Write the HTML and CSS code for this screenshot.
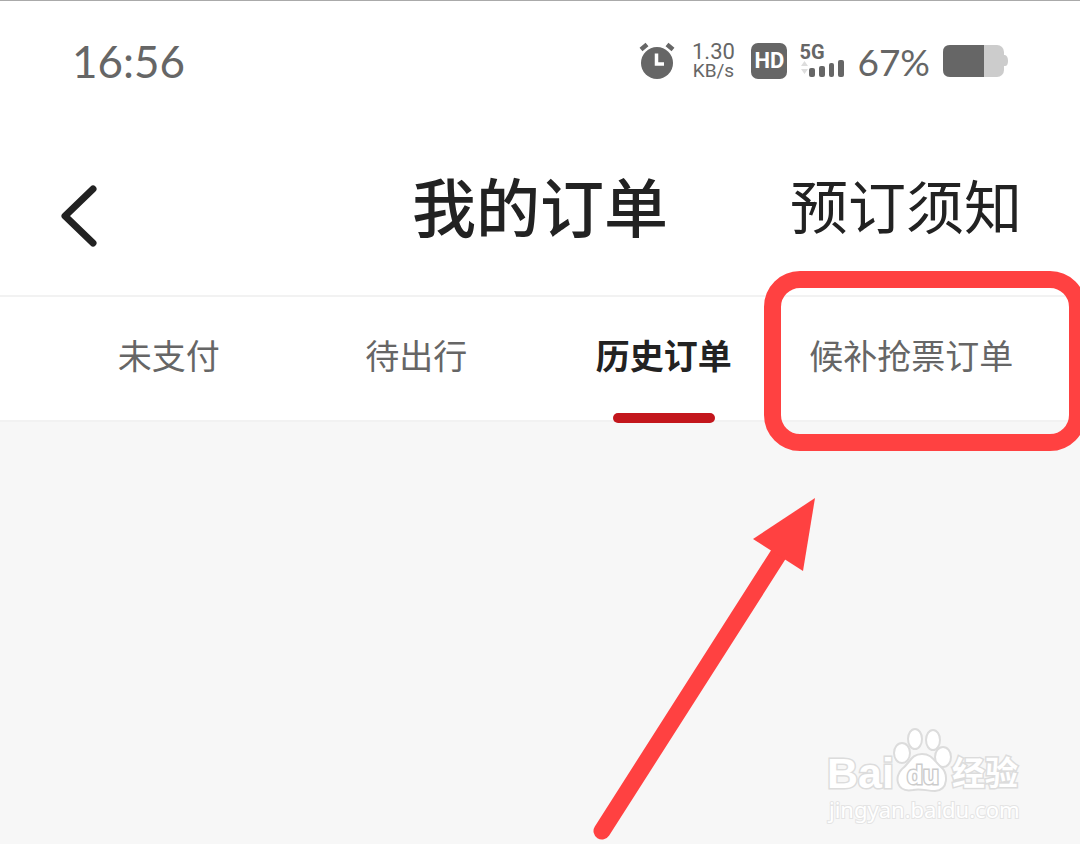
FILE: index.html
```html
<!DOCTYPE html>
<html lang="zh-CN">
<head>
<meta charset="utf-8">
<meta name="viewport" content="width=device-width, initial-scale=1">
<title>我的订单</title>
<link rel="stylesheet" href="styles.css">
</head>
<body>
<div class="page">
  <div class="status">
    <time class="clock">16:56</time>
    <div class="indicators">
      <svg class="alarm" width="36" height="38" viewBox="0 0 36 38" aria-hidden="true">
        <circle cx="18" cy="21" r="16" fill="#666"/>
        <path d="M2 7.500L8 2.500M28 2.500L34 7.500" stroke="#666" stroke-width="4.500" fill="none"/>
        <path d="M17.500 11.500V22H25" stroke="#fff" stroke-width="3.500" fill="none"/>
      </svg>
      <div class="speed"><span class="rate">1.30</span><span class="unit">KB/s</span></div>
      <span class="hd">HD</span>
      <div class="network">
        <span class="generation">5G</span>
        <svg class="bars" width="46" height="18" viewBox="0 0 46 18" aria-hidden="true">
          <path d="M2 6L5.500 1L9 6ZM2 9H9L5.500 14Z" fill="#ddd"/>
          <rect x="10" y="8" width="6" height="9" rx="2" fill="#666"/>
          <rect x="20" y="6" width="6" height="11" rx="2" fill="#666"/>
          <rect x="30" y="3" width="5" height="14" rx="2" fill="#666"/>
          <rect x="39" y="0" width="6" height="17" rx="2" fill="#666"/>
        </svg>
      </div>
      <span class="percent">67%</span>
      <svg class="battery" width="65" height="34" viewBox="0 0 65 34" aria-hidden="true">
        <rect x="0" y="1" width="61" height="32" rx="7" fill="#ccc"/>
        <path d="M61 11H62Q65 12 65 17T62 22H61Z" fill="#ccc"/>
        <path d="M41 1H7Q0 1 0 8V26Q0 33 7 33H41Z" fill="#666"/>
      </svg>
    </div>
  </div>

  <header class="header">
    <button class="back" type="button" aria-label="返回">
      <svg width="36" height="62" viewBox="0 0 36 62" aria-hidden="true">
        <path d="M32 4L4 31L32 58" fill="none" stroke="#222" stroke-width="7" stroke-linecap="round" stroke-linejoin="round"/>
      </svg>
    </button>
    <h1 class="title">我的订单</h1>
    <a class="notice" href="#notice">预订须知</a>
  </header>

  <nav class="tabs">
    <a class="tab" href="#unpaid">未支付</a>
    <a class="tab" href="#upcoming">待出行</a>
    <a class="tab active" href="#history" aria-current="page">历史订单</a>
    <a class="tab marked" href="#waitlist">候补抢票订单</a>
  </nav>

  <main class="content">
    <svg class="arrow" width="230" height="350" viewBox="590 495 230 350" aria-hidden="true">
      <path d="M602 831L780 552" stroke="#ff4141" stroke-width="17" stroke-linecap="round"/>
      <path d="M815 498L753 539L803 571Z" fill="#ff4141"/>
    </svg>
    <div class="watermark">
      <svg class="logo" width="204" height="72" viewBox="824 726 204 72" role="img" aria-label="Baidu 经验">
        <g fill="#fff" stroke="#dcdcdc" stroke-width="2">
          <ellipse cx="902" cy="753" rx="8" ry="10"/>
          <ellipse cx="915" cy="739" rx="7" ry="10"/>
          <ellipse cx="933" cy="740" rx="7" ry="10"/>
          <ellipse cx="943" cy="757" rx="8" ry="10"/>
          <path d="M922 754C932 754 934 761 941 767C948 773 949 790 935 791C927 791 920 788 913 790C896 793 894 776 902 769C910 763 911 754 922 754Z"/>
        </g>
        <text class="mark latin" x="827" y="788">Bai</text>
        <text class="mark du" x="907" y="784">du</text>
        <text class="mark chinese" x="952" y="785">经验</text>
      </svg>
      <span class="site">jingyan.baidu.com</span>
    </div>
  </main>
</div>
</body>
</html>
```
FILE: styles.css
```css
* { box-sizing: border-box; }

body {
  margin: 0;
  background: #f7f7f7;
  color: #222;
  font-family: "Noto Sans CJK SC", sans-serif;
}

a { color: inherit; text-decoration: none; }

.page {
  display: flex;
  flex-direction: column;
  min-height: 100vh;
  overflow: hidden;
  border-top: 1px solid #aaa;
}

.status {
  display: flex;
  align-items: center;
  justify-content: space-between;
  height: 120px;
  padding: 0 72px;
  background: #fff;
  color: #666;
}

.clock { font: 44px/1 Lato, sans-serif; }

.indicators { display: flex; align-items: center; }

.speed {
  display: flex;
  flex-direction: column;
  align-items: center;
  width: 44px;
  margin: 0 16px;
  font-family: Roboto, sans-serif;
}

.rate { font-size: 22px; line-height: 20px; }
.unit { font-size: 19px; line-height: 18px; }

.hd {
  width: 36px;
  border-radius: 7px;
  background: #666;
  color: #fff;
  font: 700 22px/36px Roboto, sans-serif;
  text-align: center;
}

.network {
  display: flex;
  flex-direction: column;
  width: 46px;
  margin: 0 12px;
}

.generation { font: 700 20px/16px Roboto, sans-serif; }

.percent { font: 400 37px/1 Lato, sans-serif; }

.battery { margin-left: 13px; }

.header {
  display: grid;
  grid-template-columns: 1fr auto 1fr;
  align-items: center;
  height: 176px;
  padding: 0 58px 8px 58px;
  border-bottom: 2px solid #f2f2f2;
  background: #fff;
}

.back {
  display: flex;
  justify-self: start;
  padding: 24px 0 0 3px;
  border: 0;
  background: none;
}

.title {
  margin: 0;
  font-size: 64px;
  font-weight: 500;
  line-height: 80px;
}

.notice {
  justify-self: end;
  font-size: 58px;
  line-height: 80px;
}

.tabs {
  display: grid;
  grid-template-columns: repeat(4, 1fr);
  height: 125px;
  padding: 0 45px;
  border-bottom: 2px solid #f2f2f2;
  background: #fff;
}

.tab {
  position: relative;
  display: flex;
  align-items: center;
  justify-content: center;
  padding-bottom: 8px;
  color: #666;
  font-size: 34px;
  white-space: nowrap;
}

.active { color: #222; font-weight: 700; }

.active::after {
  content: "";
  position: absolute;
  bottom: -3px;
  width: 102px;
  height: 10px;
  border-radius: 5px;
  background: #c3161c;
}

.marked::after {
  content: "";
  position: absolute;
  inset: -26px -51px -31px -24px;
  border: 17px solid #ff4141;
  border-radius: 36px;
}

.content {
  position: relative;
  flex: 1;
  min-height: 420px;
}

.arrow {
  position: absolute;
  top: 73px;
  right: 260px;
}

.watermark {
  position: absolute;
  right: 52px;
  bottom: 24px;
  display: flex;
  flex-direction: column;
}

.logo { display: block; }

.mark {
  fill: #fff;
  stroke: #dcdcdc;
  stroke-width: 3px;
  paint-order: stroke;
  font-weight: 700;
}

.latin { font-family: "Liberation Sans", sans-serif; font-size: 43px; }
.du { font-family: "Liberation Sans", sans-serif; font-size: 26px; stroke: #ccc; }
.chinese { font-size: 33px; }

.site {
  padding-left: 5px;
  color: #fff;
  font: 22px/22px "Noto Sans", sans-serif;
  -webkit-text-stroke: 2px #e4e4e4;
  paint-order: stroke fill;
}
```
